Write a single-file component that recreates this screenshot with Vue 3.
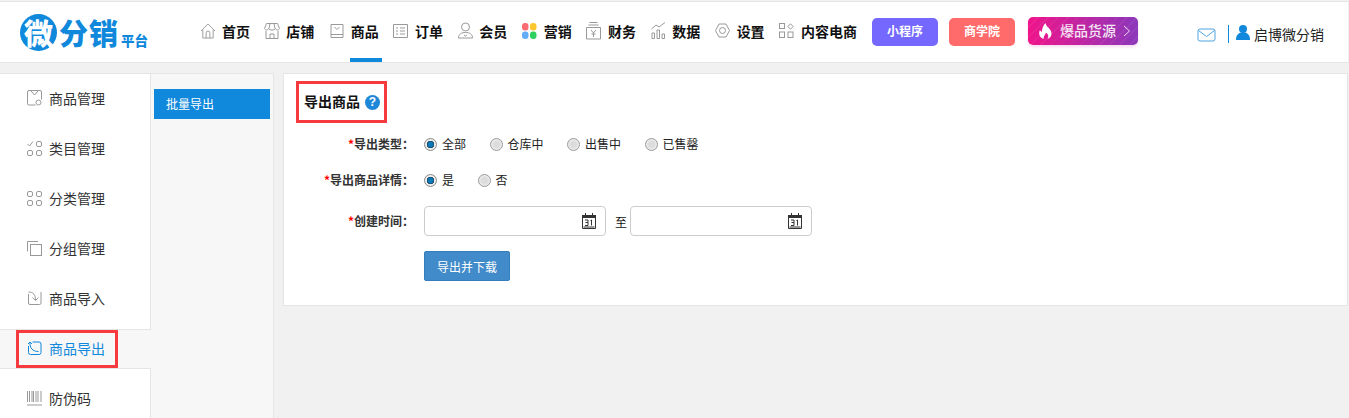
<script setup>
const navItems = [
  { label: '首页', icon: 'home' }, { label: '店铺', icon: 'shop' }, { label: '商品', icon: 'goods', active: true },
  { label: '订单', icon: 'order' }, { label: '会员', icon: 'member' }, { label: '营销', icon: 'market' },
  { label: '财务', icon: 'finance' }, { label: '数据', icon: 'data' }, { label: '设置', icon: 'gear' },
  { label: '内容电商', icon: 'content' }
]
const sideItems = [
  { label: '商品管理', icon: 'manage' }, { label: '类目管理', icon: 'category' }, { label: '分类管理', icon: 'sort' },
  { label: '分组管理', icon: 'group' }, { label: '商品导入', icon: 'import' }, { label: '商品导出', icon: 'export', active: true },
  { label: '防伪码', icon: 'code' }
]
const typeOptions = [
  { label: '全部', on: true }, { label: '仓库中' }, { label: '出售中' }, { label: '已售罄' }
]
const detailOptions = [{ label: '是', on: true }, { label: '否' }]
</script>

<template>
  <div class="page">
    <header class="topbar">
      <div class="logo">
        <span class="logo-circle">微</span>
        <span class="logo-name">分销</span>
        <span class="logo-sub">平台</span>
      </div>
      <nav class="nav">
        <a v-for="item in navItems" :key="item.label" class="nav-item" :class="{ on: item.active }">
          <span class="nav-icon">
            <svg v-if="item.icon === 'home'" width="17" height="18" viewBox="0 0 17 18"><path d="M1 9 8.5 1.5 16 9M3 7.5V16.5H14V7.5M6.5 16.5V11a2 2 0 0 1 4 0v5.500" /></svg>
            <svg v-else-if="item.icon === 'shop'" width="16" height="18" viewBox="0 0 16 18"><path d="M2.500 1.500H13.500L15.500 6.500C14.500 8.500 12.500 8.500 11.500 6.500 10.500 8.500 5.500 8.500 4.500 6.500 3.500 8.500 1.500 8.500.5 6.500ZM2 9V16.500H14V9M6 16.500V12H10V16.500M6 1.500 5 6.500M10 1.500 11 6.500" /></svg>
            <svg v-else-if="item.icon === 'goods'" width="14" height="16" viewBox="0 0 14 16"><path d="M1 1.500H13V14.500H1ZM1 11.500H13M4.500 4 7 6.500 9.500 4" /></svg>
            <svg v-else-if="item.icon === 'order'" width="15" height="16" viewBox="0 0 15 16"><path d="M.5 1.500H14.500V14.500H.5ZM3 5H5M7 5H12M3 8H5M7 8H12M3 11H5M7 11H12" /></svg>
            <svg v-else-if="item.icon === 'member'" width="15" height="17" viewBox="0 0 15 17"><circle cx="7.500" cy="5" r="4" /><path d="M.5 16C.5 12 3.500 10.500 7.500 10.500S14.500 12 14.500 16ZM6 13 7.500 14 9 13" /></svg>
            <svg v-else-if="item.icon === 'market'" class="solid" width="15" height="16" viewBox="0 0 15 16"><rect x="0" y="0" width="6.500" height="7.500" rx="3" fill="#fb6c74" stroke="none" /><rect x="8" y="0" width="6.500" height="7.500" rx="3" fill="#fdc62e" stroke="none" /><rect x="0" y="8.500" width="6.500" height="7.500" rx="3" fill="#62adf6" stroke="none" /><rect x="8" y="8.500" width="6.500" height="7.500" rx="3" fill="#2fd05f" stroke="none" /></svg>
            <svg v-else-if="item.icon === 'finance'" width="15" height="18" viewBox="0 0 15 18"><path d="M3.500 .5H11.500M2.500 3H12.500M.5 5.500H14.500V17H.5ZM5 8 7.500 11 10 8M7.500 11V15M5.500 12H9.500" /></svg>
            <svg v-else-if="item.icon === 'data'" width="15" height="17" viewBox="0 0 15 17"><path d="M1 16.500V11H3.500V16.500ZM6 16.500V8H8.500V16.500ZM11 16.500V12H13.500V16.500ZM.5 7 5 3 8 5 14 .5" /></svg>
            <svg v-else-if="item.icon === 'gear'" width="15" height="15" viewBox="0 0 15 15"><path d="M4 1H11L14.500 7.500 11 14H4L.5 7.500Z" stroke-linejoin="round" /><circle cx="7.500" cy="7.500" r="3" /></svg>
            <svg v-else width="15" height="15" viewBox="0 0 15 15"><rect x=".5" y=".5" width="5" height="5" /><path d="M11.500.8 14.200 3.500 11.500 6.200 8.800 3.500Z" /><rect x=".5" y="9" width="5" height="5.500" /><rect x="9" y="9" width="5" height="5.500" /></svg>
          </span>
          <span class="nav-text">{{ item.label }}</span>
        </a>
      </nav>
      <a class="pill pill-violet">小程序</a>
      <a class="pill pill-coral">商学院</a>
      <a class="hot">
        <svg class="flame" width="15" height="16" viewBox="0 0 15 16"><path fill="#fff" d="M7.500 0C8 3 10 4 12 6.500 14.500 9.500 14 14.500 9.500 16 11 14 10.500 11.500 8 9.500 7.500 11.500 6 12 5.500 16 1.500 14.500.2 10.500 2 7c.5 1 1 1.500 2 2C3.800 5.500 5.500 2 7.500 0Z" /></svg>
        <span class="hot-text">爆品货源</span>
        <svg class="chev" width="8" height="12" viewBox="0 0 8 12"><path d="M1 1 6.500 6 1 11" /></svg>
      </a>
      <svg class="mail" width="19" height="14" viewBox="0 0 19 14"><path d="M1 3a2 2 0 0 1 2-2H16a2 2 0 0 1 2 2V11a2 2 0 0 1-2 2H3a2 2 0 0 1-2-2ZM1.500 2.500 9.500 8.500 17.500 2.500" /></svg>
      <span class="divider"></span>
      <svg class="user" width="14" height="15" viewBox="0 0 14 15"><circle cx="7" cy="4" r="4" fill="#1088dc" /><path fill="#1088dc" d="M0 15C0 9.500 3 8 5 7.500H9C11 8 14 9.500 14 15Z" /></svg>
      <span class="user-name">启博微分销</span>
    </header>

    <div class="body">
      <aside class="side">
        <a v-for="item in sideItems" :key="item.label" class="side-item" :class="{ on: item.active }">
          <span v-if="item.active" class="mark"></span>
          <svg v-if="item.icon === 'manage'" width="15" height="16" viewBox="0 0 15 16"><path d="M8.500 15H2a1.500 1.500 0 0 1-1.500-1.500V2A1.500 1.500 0 0 1 2 .5H13A1.500 1.500 0 0 1 14.500 2V9.500M4 1 7.500 5 11 1" /><circle cx="11.500" cy="12.500" r="2.500" /></svg>
          <svg v-else-if="item.icon === 'category'" width="15" height="15" viewBox="0 0 15 15"><path d="M.5 3 2.500 5 6 .5" /><rect x="9.500" y=".5" width="5" height="5" rx="1.500" /><rect x=".5" y="9.500" width="5" height="5" rx="1.500" /><rect x="9.500" y="9.500" width="5" height="5" rx="1.500" /></svg>
          <svg v-else-if="item.icon === 'sort'" width="15" height="15" viewBox="0 0 15 15"><rect x=".5" y=".5" width="5" height="5" rx="1.500" /><rect x="9.500" y=".5" width="5" height="5" rx="1.500" /><rect x=".5" y="9.500" width="5" height="5" rx="1.500" /><rect x="9.500" y="9.500" width="5" height="5" rx="1.500" /></svg>
          <svg v-else-if="item.icon === 'group'" width="15" height="15" viewBox="0 0 15 15"><rect x="3.500" y="3.500" width="11" height="11" /><path d="M.5 10.500V.5H11" /></svg>
          <svg v-else-if="item.icon === 'import'" width="14" height="14" viewBox="0 0 14 14"><path d="M1 3V12a1.500 1.500 0 0 0 1.500 1.500H12a1.500 1.500 0 0 0 1.500-1.500V1M1 1C6 1 8 4 8 9M5 6.500 8 9.500 11 6.500" /></svg>
          <svg v-else-if="item.icon === 'export'" class="blue" width="14" height="14" viewBox="0 0 14 14"><path d="M5 1H11.500a2 2 0 0 1 2 2V11.500a2 2 0 0 1-2 2H3a2 2 0 0 1-2-2V5M2.500 1C2 7 5 10.500 11 10.500M.5 3 2.500 1 4.500 3" /></svg>
          <svg v-else width="15" height="15" viewBox="0 0 15 15"><path d="M.5 0V11M2.500 0V11M5 0V11M6.500 0V11M9 0V11M11 0V11M14 0V11M0 14H15" /></svg>
          <span>{{ item.label }}</span>
        </a>
      </aside>
      <aside class="subside">
        <a class="tab">批量导出</a>
      </aside>
      <main class="card">
        <h2 class="title">
          <span class="title-text">导出商品</span>
          <span class="help">?</span>
        </h2>
        <div class="row">
          <label class="field-label"><i>*</i>导出类型：</label>
          <span v-for="o in typeOptions" :key="o.label" class="opt">
            <span class="radio" :class="{ on: o.on }"></span>{{ o.label }}
          </span>
        </div>
        <div class="row">
          <label class="field-label"><i>*</i>导出商品详情：</label>
          <span v-for="o in detailOptions" :key="o.label" class="opt">
            <span class="radio" :class="{ on: o.on }"></span>{{ o.label }}
          </span>
        </div>
        <div class="row row-date">
          <label class="field-label"><i>*</i>创建时间：</label>
          <span class="date">
            <svg width="14" height="16" viewBox="0 0 14 16"><path fill="none" stroke="#333" d="M.5 2.500H13.500V15.500H.5ZM3.500 0V3M10.500 0V3" /><path fill="#333" d="M0 2H14V5H0Z" /><path fill="none" stroke="#333" d="M3 7H6V9.500H3.500M6 9.500V12.500H3M8.500 7.500 9.500 7V12.500M1.500 14H12.500" /></svg>
          </span>
          <span class="to">至</span>
          <span class="date">
            <svg width="14" height="16" viewBox="0 0 14 16"><path fill="none" stroke="#333" d="M.5 2.500H13.500V15.500H.5ZM3.500 0V3M10.500 0V3" /><path fill="#333" d="M0 2H14V5H0Z" /><path fill="none" stroke="#333" d="M3 7H6V9.500H3.500M6 9.500V12.500H3M8.500 7.500 9.500 7V12.500M1.500 14H12.500" /></svg>
          </span>
        </div>
        <button class="submit" type="button">导出并下载</button>
      </main>
    </div>
  </div>
</template>

<style scoped>
.page {
  width: 1349px;
  height: 418px;
  overflow: hidden;
  background: #f1f1f1;
  font-family: "Noto Sans CJK SC", "Liberation Sans", sans-serif;
  font-size: 12px;
  color: #333;
}
.topbar {
  display: flex;
  align-items: center;
  height: 60px;
  margin-top: 1px;
  border-top: 1px solid #e5e5e5;
  border-bottom: 1px solid #e5e5e5;
  border-right: 1px solid #eee;
  background: #fff;
  box-sizing: content-box;
  padding-left: 20px;
}
.logo {
  display: flex;
  align-items: center;
  width: 180px;
  flex: none;
  color: #1088dc;
  font-weight: 900;
}
.logo-circle {
  width: 37px;
  height: 37px;
  border-radius: 50%;
  background: #1088dc;
  color: #fff;
  font-size: 29px;
  line-height: 36px;
  text-align: center;
}
.logo-name {
  margin-left: 2px;
  font-size: 29px;
  line-height: 36px;
  letter-spacing: 1px;
}
.logo-sub {
  margin: 16px 0 0 2px;
  font-size: 13.500px;
  line-height: 16px;
}
.nav {
  display: flex;
  align-self: stretch;
  flex: none;
  width: 672px;
}
.nav-item {
  position: relative;
  display: flex;
  align-items: center;
  width: 64.330px;
  flex: none;
  color: #111;
  font-size: 14px;
  font-weight: 700;
  white-space: nowrap;
}
.nav-icon {
  display: flex;
  justify-content: center;
  width: 16px;
  margin: 0 6px 3px 0;
  flex: none;
}
.nav-icon svg {
  fill: none;
  stroke: #999;
}
.nav-text {
  margin-bottom: 3px;
}
.nav-item.on::after {
  content: "";
  position: absolute;
  left: 21px;
  bottom: 0;
  width: 32px;
  height: 4px;
  background: #1088dc;
}
.pill {
  display: block;
  width: 66px;
  height: 28px;
  margin: 0 11px 0 0;
  border-radius: 5px;
  color: #fff;
  font-weight: 700;
  line-height: 26px;
  text-align: center;
  flex: none;
}
.pill-violet { background: #7468fe; }
.pill-coral { background: #ff6a6a; margin-right: 13px; }
.hot {
  display: flex;
  align-items: center;
  width: 110px;
  height: 28px;
  margin-bottom: 2px;
  padding-left: 10px;
  box-sizing: border-box;
  flex: none;
  border-radius: 5px;
  color: #f4e6f4;
  font-size: 14px;
  font-weight: 500;
  background:
    repeating-linear-gradient(135deg, rgba(255,255,255,.06) 0 1px, transparent 1px 7px),
    linear-gradient(90deg, #f0148a, #8c37bb);
  box-shadow: 0 2px 3px rgba(200, 60, 170, .18);
}
.flame { margin-right: 6px; flex: none; }
.hot-text { margin: 0 0 2px 1px; }
.chev { margin-left: 7px; fill: none; stroke: #f4dff0; flex: none; }
.mail {
  margin: 5px 0 0 59px;
  fill: none;
  stroke: #4ea3e0;
  flex: none;
}
.divider {
  width: 1px;
  height: 18px;
  margin: 4px 0 0 12px;
  background: #1088dc;
  flex: none;
}
.user { margin: 1px 0 0 7px; flex: none; }
.user-name {
  margin: 3px 0 0 4px;
  font-size: 14px;
  color: #222;
  white-space: nowrap;
}
.body {
  display: flex;
  align-items: flex-start;
  margin-top: 10px;
}
.side {
  width: 150px;
  height: 360px;
  flex: none;
  background: #fff;
  border-top: 1px solid #e5e5e5;
  border-right: 1px solid #e5e5e5;
}
.side-item {
  position: relative;
  display: flex;
  align-items: center;
  gap: 7px;
  height: 50px;
  padding: 0 0 2px 27px;
  box-sizing: border-box;
  font-size: 14px;
  color: #333;
}
.side-item svg {
  width: 15px;
  flex: none;
  fill: none;
  stroke: #999;
}
.side-item.on {
  height: 40px;
  margin: 5px -1px 5px 0;
  border-top: 1px solid #e5e5e5;
  border-bottom: 1px solid #e5e5e5;
  background: #f7f7f7;
  color: #1088dc;
}
.side-item svg.blue { stroke: #1088dc; }
.mark {
  position: absolute;
  left: 16px;
  top: 0;
  width: 102px;
  height: 38px;
  box-sizing: border-box;
  border: 3px solid #f73a3e;
}
.subside {
  width: 122px;
  height: 360px;
  flex: none;
  box-sizing: content-box;
  background: #f7f7f7;
  border-top: 1px solid #e5e5e5;
  border-right: 1px solid #e5e5e5;
}
.tab {
  display: block;
  width: 116px;
  height: 30px;
  margin: 15px 0 0 3px;
  padding-left: 12px;
  box-sizing: border-box;
  background: #1088dc;
  color: #fff;
  font-size: 12px;
  line-height: 30px;
}
.card {
  width: 1065px;
  margin-left: 9px;
  padding: 7px 0 24px 12px;
  box-sizing: border-box;
  flex: none;
  background: #fff;
  border: 1px solid #e5e5e5;
}
.title {
  display: flex;
  align-items: center;
  width: 91px;
  height: 42px;
  margin: 0 0 3px;
  padding-left: 5px;
  box-sizing: border-box;
  border: 3px solid #f73a3e;
  color: #111;
  font-size: 14px;
  font-weight: 700;
  white-space: nowrap;
}
.title-text { margin-bottom: 2px; }
.help {
  width: 15px;
  height: 15px;
  margin-left: 5px;
  flex: none;
  border-radius: 50%;
  background: #1f87d8;
  color: #fff;
  font: 700 12px/15px "Liberation Sans", sans-serif;
  text-align: center;
}
.row {
  display: flex;
  align-items: center;
  height: 36px;
  color: #222;
}
.row-date {
  height: 30px;
  margin-top: 8px;
}
.field-label {
  width: 118px;
  margin: 0 10px 2px 0;
  flex: none;
  text-align: right;
  font-weight: 700;
  color: #333;
  white-space: nowrap;
}
.field-label i {
  color: #f00;
  font-style: normal;
}
.opt {
  display: flex;
  align-items: center;
  margin-right: 23.500px;
  white-space: nowrap;
  line-height: 16px;
  padding-bottom: 1px;
}
.radio {
  width: 13px;
  height: 13px;
  margin: 1px 5px 0 0;
  box-sizing: border-box;
  border: 1px solid #9a9a9a;
  border-radius: 50%;
  background: radial-gradient(circle at 50% 50%, #dcdcdc 0 35%, #fafafa 100%);
  flex: none;
}
.radio.on {
  border-color: #8a8a8a;
  background: radial-gradient(circle at 50% 50%, #0d78b8 0 2.500px, #1a3d55 3.500px, #ececec 4px);
}
.date {
  display: flex;
  align-items: center;
  justify-content: flex-end;
  width: 182px;
  height: 30px;
  padding-right: 9px;
  box-sizing: border-box;
  border: 1px solid #ccc;
  border-radius: 4px;
  background: #fff;
}
.to {
  width: 24px;
  padding-left: 9px;
  box-sizing: border-box;
  color: #111;
}
.submit {
  display: block;
  width: 86px;
  height: 30px;
  margin: 15px 0 0 128px;
  padding: 0;
  border: 1px solid #357ebd;
  border-radius: 2px;
  background: #428bca;
  color: #fff;
  font: 12px "Noto Sans CJK SC", sans-serif;
}
</style>

<style>
body { background: #f1f1f1; }
</style>
